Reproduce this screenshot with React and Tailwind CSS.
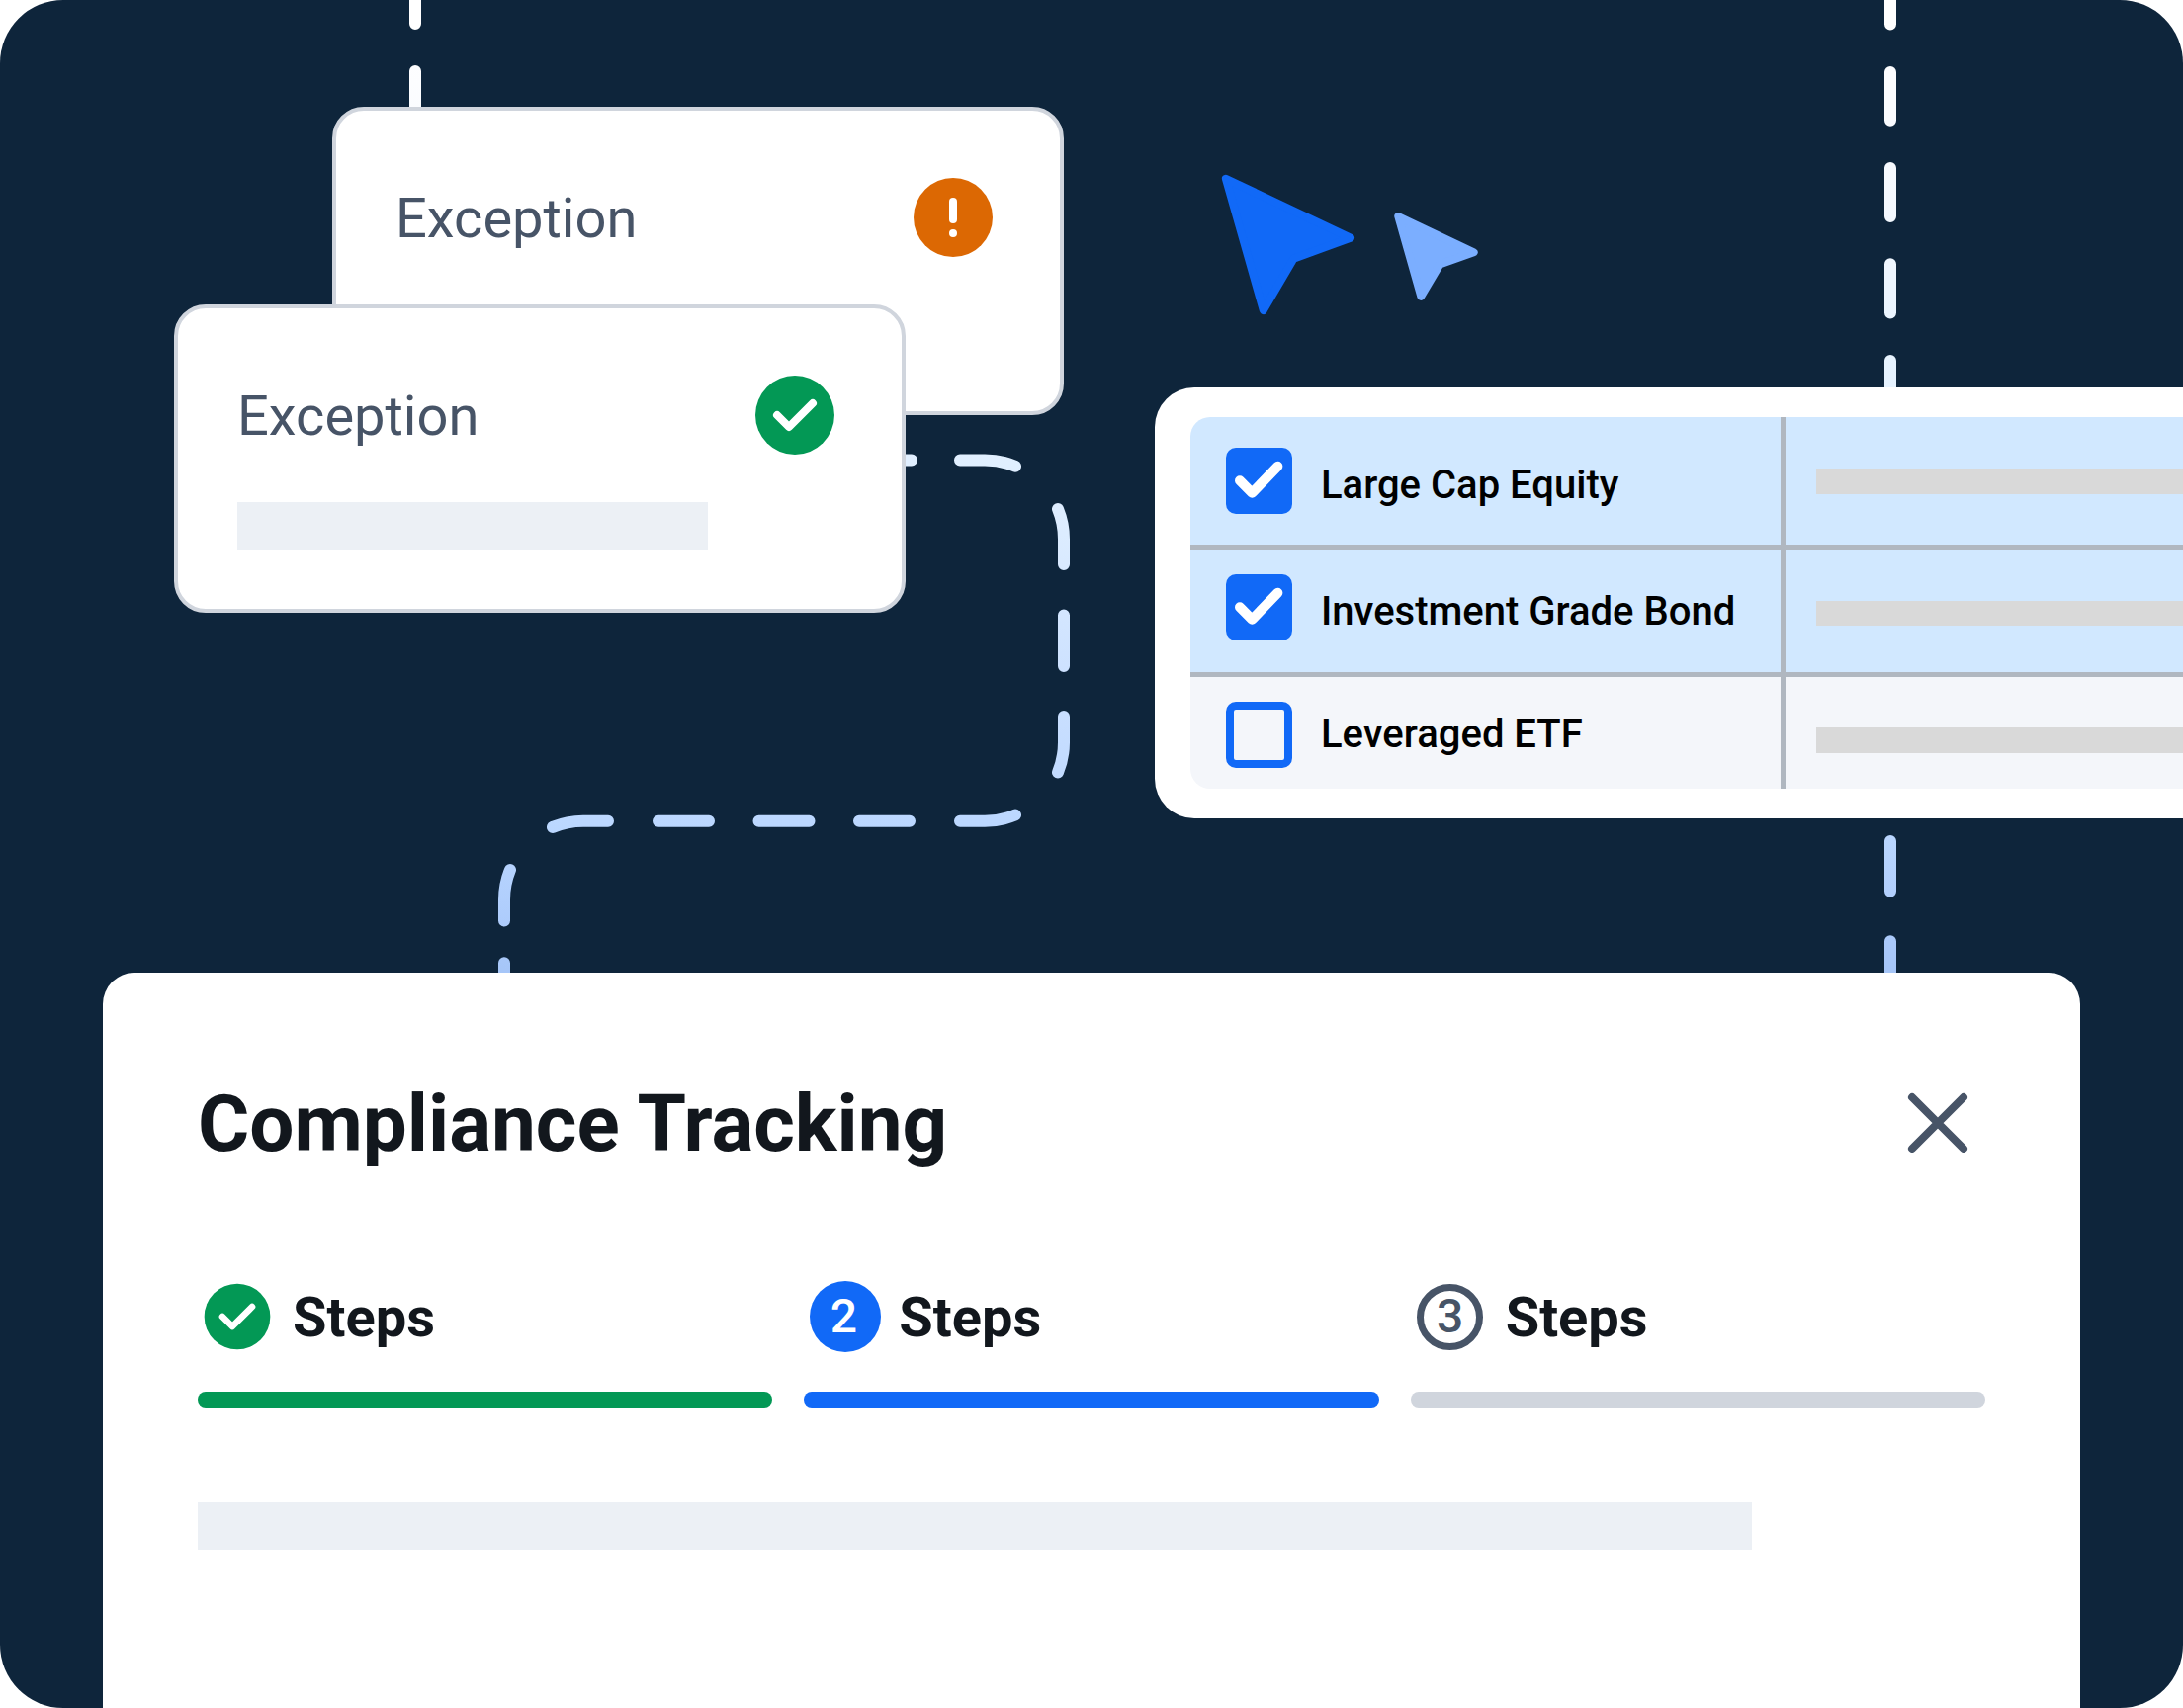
const rows = [
  {
    label: "Large Cap Equity",
    checked: true,
    row: "h-[134px] border-b-[5px] bg-[#d1e8ff]",
    box: "mt-[31px]",
    text: "mt-[46px]",
    bar: "mt-[52px]",
  },
  {
    label: "Investment Grade Bond",
    checked: true,
    row: "h-[128.5px] border-b-[5px] bg-[#d1e8ff]",
    box: "mt-[25px]",
    text: "mt-[40px]",
    bar: "mt-[51.5px]",
  },
  {
    label: "Leveraged ETF",
    checked: false,
    row: "h-[113.5px] bg-[#f4f6fa]",
    box: "mt-[25.5px]",
    text: "mt-[35.5px]",
    bar: "mt-[51.5px]",
  },
];

const steps = [
  { state: "done", bar: "bg-[#039855]" },
  { state: "active", number: 2, bar: "bg-[#1169f7]" },
  { state: "next", number: 3, bar: "bg-[#d0d5dd]" },
];

// DASHED CONNECTORS
function Connectors() {
  return (
    <svg className="absolute inset-0" width="2208" height="1728" viewBox="0 0 2208 1728" fill="none">
      <defs>
        <linearGradient id="line" gradientUnits="userSpaceOnUse" x1="0" y1="0" x2="0" y2="1000">
          <stop offset="0.03" stopColor="#ffffff" />
          <stop offset="0.2" stopColor="#f5f9ff" />
          <stop offset="0.38" stopColor="#e6f3ff" />
          <stop offset="0.54" stopColor="#dcecff" />
          <stop offset="0.7" stopColor="#cbe0ff" />
          <stop offset="0.83" stopColor="#bcd8ff" />
          <stop offset="0.91" stopColor="#b1cffd" />
          <stop offset="0.98" stopColor="#a6c6f8" />
        </linearGradient>
      </defs>
      <g stroke="url(#line)" strokeWidth="12" strokeLinecap="round">
        <path
          d="M420 -20V24M420 72V120
             M900 465.5H922
             M971 465.5H996A80 80 0 0 1 1027 471.7
             M1070 515A80 80 0 0 1 1076 546V571
             M1076 622.5V674
             M1076 725V750.5A80 80 0 0 1 1070 781.5
             M1027 824.5A80 80 0 0 1 996 830.7H971
             M920 830.7H869M818.5 830.7H767.5M717 830.7H666
             M615 830.7H590A80 80 0 0 0 559 836.9
             M516 880A80 80 0 0 0 510 911V931.5
             M510 974.3V1000"
        />
        <path d="M1912 -20V24.5M1912 73V121.7M1912 170V219M1912 267.3V316.5M1912 365V400M1912 851V901.7M1912 952.3V1000" />
      </g>
    </svg>
  );
}

function Pointers() {
  return (
    <svg className="absolute left-[1220px] top-[160px]" width="300" height="180" viewBox="1220 160 300 180" strokeWidth="8" strokeLinejoin="round">
      <path d="M1239.9 180.8L1366 240.7L1308.5 261.7L1277.8 314Z" fill="#1169f7" stroke="#1169f7" />
      <path d="M1414.3 219L1490.7 255.3L1456.3 267.6L1437.3 299.8Z" fill="#7baeff" stroke="#7baeff" />
    </svg>
  );
}

function WarningIcon() {
  return (
    <svg className="size-20" viewBox="0 0 80 80">
      <circle cx="40" cy="40" r="40" fill="#dc6803" />
      <path d="M40 24V42" stroke="#fff" strokeWidth="8" strokeLinecap="round" />
      <circle cx="40" cy="56" r="4" fill="#fff" />
    </svg>
  );
}

function SuccessIcon() {
  return (
    <svg className="size-20" viewBox="0 0 80 80">
      <circle cx="40" cy="40" r="40" fill="#039855" />
      <path d="M22 40L34 52L58 28" fill="none" stroke="#fff" strokeWidth="8" strokeLinecap="round" strokeLinejoin="round" />
    </svg>
  );
}

function Checkbox({ checked }) {
  if (!checked) {
    return <div className="size-[67px] rounded-[10px] border-8 border-[#1169f7]" />;
  }
  return (
    <div className="size-[67px] rounded-[10px] bg-[#1169f7]">
      <svg viewBox="0 0 67 67">
        <path d="M14 33.3L26.4 45.7L52.4 18.8" fill="none" stroke="#fff" strokeWidth="10" strokeLinecap="round" strokeLinejoin="round" />
      </svg>
    </div>
  );
}

function StepIcon({ state, number }) {
  if (state === "done") {
    return (
      <svg className="size-20" viewBox="0 0 24 24">
        <circle cx="12" cy="12" r="10" fill="#039855" />
        <path d="M7.5 12L10.5 15L16.5 9" fill="none" stroke="#fff" strokeWidth="2" strokeLinecap="round" strokeLinejoin="round" />
      </svg>
    );
  }
  if (state === "active") {
    return (
      <div className="ml-[5.5px] mr-[2.5px] flex size-[72px] items-center justify-center rounded-full bg-[#1169f7] pr-[3px] text-[48px] leading-none font-medium text-white">
        {number}
      </div>
    );
  }
  return (
    <div className="mx-[6.5px] flex size-[67px] items-center justify-center rounded-full border-7 border-[#475467] text-[48px] leading-none font-medium text-[#475467]">
      {number}
    </div>
  );
}

function App() {
  return (
    <div className="relative h-[1728px] w-[2208px] overflow-hidden rounded-[64px] bg-[#0e253b] font-['Roboto',sans-serif]">

      <Connectors />
      <Pointers />

      {/* EXCEPTION CARDS */}
      <div className="absolute left-[336px] top-[108px] h-[312px] w-[740px] rounded-[32px] border-4 border-[#d0d5dd] bg-white pt-[68px] pr-[68px] pl-[60px]">
        <div className="flex items-center justify-between">
          <span className="pt-0.5 text-[56px] leading-[64px] text-[#475467]">Exception</span>
          <WarningIcon />
        </div>
      </div>

      <div className="absolute left-[176px] top-[308px] h-[312px] w-[740px] rounded-[32px] border-4 border-[#d0d5dd] bg-white pt-[68px] pr-[68px] pl-[60px]">
        <div className="flex items-center justify-between">
          <span className="pt-0.5 text-[56px] leading-[64px] text-[#475467]">Exception</span>
          <SuccessIcon />
        </div>
        <div className="mt-12 h-12 w-[476px] bg-[#ecf0f5]" />
      </div>

      {/* FUND TABLE */}
      <div className="absolute left-[1168px] top-[392px] h-[436px] w-[1100px] rounded-[40px] bg-white py-[30px] pl-9">
        <div className="overflow-hidden rounded-l-[20px]">
          {rows.map((item) => (
            <div key={item.label} className={`flex border-[#b0b7c0] ${item.row}`}>
              <div className="flex w-[602px] gap-[29px] border-r-[5px] border-[#b0b7c0] pl-9">
                <div className={item.box}>
                  <Checkbox checked={item.checked} />
                </div>
                <span className={`text-[40px] leading-[46px] font-medium whitespace-nowrap text-black ${item.text}`}>
                  {item.label}
                </span>
              </div>
              <div className={`ml-[31px] h-[25.5px] flex-1 bg-[#d9d9d9] ${item.bar}`} />
            </div>
          ))}
        </div>
      </div>

      {/* COMPLIANCE PANEL */}
      <div className="absolute left-[104px] top-[984px] h-[744px] w-[2000px] rounded-t-[32px] bg-white px-24 pt-24">
        <div className="flex h-28 items-center justify-between">
          <h1 className="pt-0.5 text-[80px] leading-[96px] font-bold text-[#12171d]">Compliance Tracking</h1>
          <svg className="size-24" viewBox="0 0 96 96">
            <path d="M22 22L74 74M74 22L22 74" stroke="#475467" strokeWidth="8" strokeLinecap="round" />
          </svg>
        </div>

        <div className="mt-[100px] grid grid-cols-3 gap-8">
          {steps.map((step, index) => (
            <div key={index}>
              <div className="flex h-20 items-center gap-4">
                <StepIcon state={step.state} number={step.number} />
                <span className="pt-0.5 text-[56px] leading-[64px] font-bold text-[#12171d]">Steps</span>
              </div>
              <div className={`mt-9 h-4 rounded-full ${step.bar}`} />
            </div>
          ))}
        </div>

        <div className="mt-24 h-12 w-[1572px] bg-[#ecf0f5]" />
      </div>

    </div>
  );
}

export default App;
